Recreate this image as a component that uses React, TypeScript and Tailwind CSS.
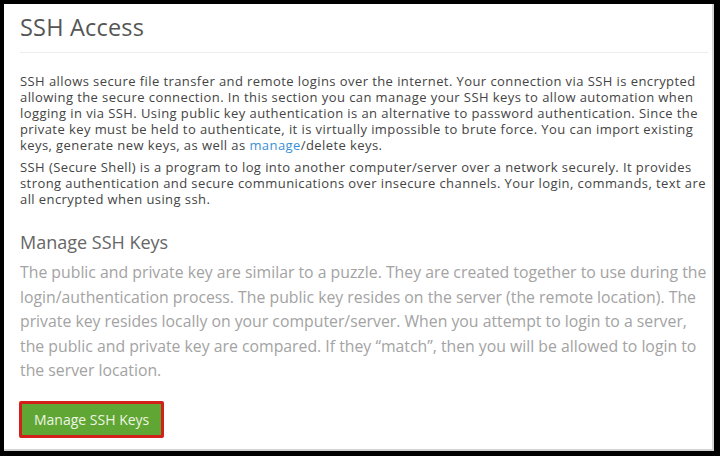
export default function App() {
  return (
    <div className="h-[456px] w-[720px] bg-black pb-[5px] pl-[4px] pr-[6px] pt-[4px] font-['Open_Sans',sans-serif]">
      <div className="h-full border-b-2 border-r-2 border-[#d4d4d4] bg-white pl-[16px] pr-[4px]">
        <h1 className="pt-[7px] text-[23.5px] leading-[32px] tracking-[0.2px] text-[#555]">SSH Access</h1>
        <hr className="mt-[9px] border-[#eee]" />

        <p className="mt-[20px] whitespace-nowrap text-[13px] leading-[16px] tracking-[0.42px] text-[#444]">
          SSH allows secure file transfer and remote logins over the internet. Your connection via SSH is encrypted
          <br />
          allowing the secure connection. In this section you can manage your SSH keys to allow automation when
          <br />
          logging in via SSH. Using public key authentication is an alternative to password authentication. Since the
          <br />
          private key must be held to authenticate, it is virtually impossible to brute force. You can import existing
          <br />
          keys, generate new keys, as well as <span className="text-[#3a8fd6]">manage</span>/delete keys.
        </p>
        <p className="mt-[6px] whitespace-nowrap text-[13px] leading-[16px] tracking-[0.42px] text-[#444]">
          SSH (Secure Shell) is a program to log into another computer/server over a network securely. It provides
          <br />
          strong authentication and secure communications over insecure channels. Your login, commands, text are
          <br />
          all encrypted when using ssh.
        </p>

        <h2 className="mt-[23px] text-[18px] leading-[24px] text-[#666]">Manage SSH Keys</h2>
        <p className="mt-[6px] whitespace-nowrap text-[15.8px] leading-[24.5px] text-[#a3a3a3]">
          The public and private key are similar to a puzzle. They are created together to use during the
          <br />
          login/authentication process. The public key resides on the server (the remote location). The
          <br />
          private key resides locally on your computer/server. When you attempt to login to a server,
          <br />
          the public and private key are compared. If they “match”, then you will be allowed to login to
          <br />
          the server location.
        </p>

        <button className="ml-[-1px] mt-[18px] rounded-[2px] border-[3px] border-[#d3201a] bg-[#5fa634] px-[12px] py-[7px] text-[14px] leading-[17px] text-[#eef5e2]">
          Manage SSH Keys
        </button>
      </div>
    </div>
  );
}
